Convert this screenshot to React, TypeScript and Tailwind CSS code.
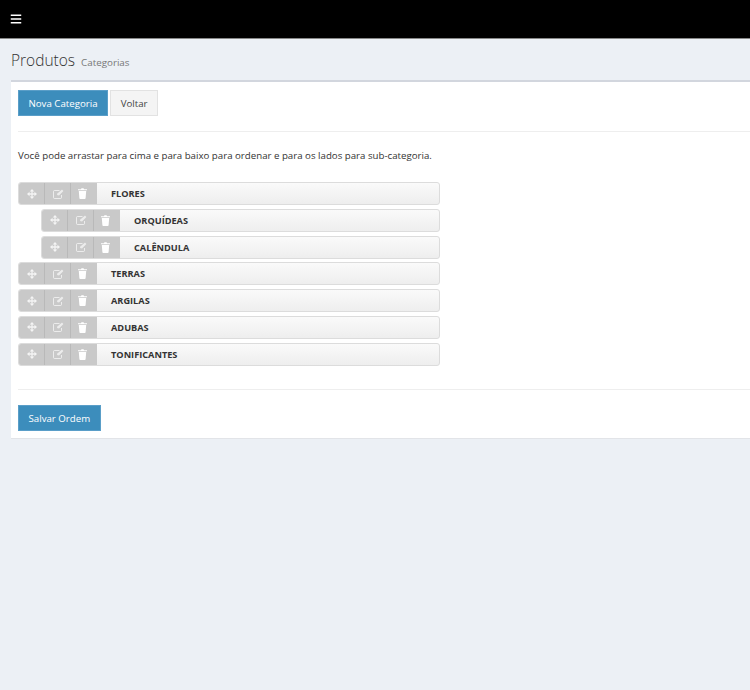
import React from "react";
import { FaBars } from "react-icons/fa";

function MoveIcon() {
  return (
    <svg width="10" height="10" viewBox="0 0 11 11" fill="#fff" fillOpacity="0.8" className="ml-[1px]">
      <path d="M5.5 0 8 2.8H6.2V4.8H8.2V3L11 5.5 8.2 8V6.2H6.2V8.2H8L5.5 11 3 8.2H4.8V6.2H2.8V8L0 5.5 2.8 3V4.8H4.8V2.8H3Z" />
    </svg>
  );
}

function EditIcon() {
  return (
    <svg width="11" height="10" viewBox="0 0 11 10" fill="none" stroke="#fff" strokeOpacity="0.65" className="ml-[1px]">
      <path d="M6.5 1.5H1.5A1 1 0 0 0 .5 2.5V8.5A1 1 0 0 0 1.5 9.5H7.5A1 1 0 0 0 8.5 8.5V6" />
      <path d="M4 6 4.4 4.4 9 .6 10.4 2 6 6.4Z" fill="#fff" fillOpacity="0.65" stroke="none" />
    </svg>
  );
}

function TrashIcon() {
  return (
    <svg width="9" height="11" viewBox="0 0 9 11" fill="#fff" className="mr-[3px]">
      <path d="M0 1.2H3L3.4 .2H5.6L6 1.2H9V2.3H0ZM.8 3H8.2L7.6 10.2A.9.9 0 0 1 6.7 11H2.3A.9.9 0 0 1 1.4 10.2Z" />
    </svg>
  );
}

function Row({ label, child }: { label: string; child?: boolean }) {
  return (
    <li className={child ? "pl-[23px]" : ""}>
      <div className="flex h-[23px] rounded-[3px] border border-[#dcdcdc] bg-gradient-to-b from-[#fafafa] to-[#eeeeee] overflow-hidden">
        <div className="flex shrink-0 bg-[#c9c9c9] h-full">
          <span className="w-[26px] flex items-center justify-center border-r border-[#b9b9b9]"><MoveIcon /></span>
          <span className="w-[26px] flex items-center justify-center border-r border-[#b9b9b9]"><EditIcon /></span>
          <span className="w-[26px] flex items-center justify-center"><TrashIcon /></span>
        </div>
        <span className="pl-[14px] leading-[22px] text-[9.2px] font-bold text-[#333]">{label}</span>
      </div>
    </li>
  );
}

export default function App() {
  return (
    <div className="min-h-[690px] bg-[#ecf0f5] overflow-hidden font-['Open_Sans',sans-serif] text-[#333]">
      <header className="h-[39px] bg-black border-b border-[#888] flex items-center pl-[10px]">
        <FaBars size={12} className="text-white" />
      </header>
      <div className="h-[41px] pl-[11px] flex items-baseline pt-[10px]">
        <h1 className="text-[15.5px] font-light leading-[22px] text-[#333]">Produtos</h1>
        <small className="ml-[6px] text-[9.8px] text-[#777]">Categorias</small>
      </div>
      <section className="ml-[11px] w-[760px] h-[359px] bg-white border-t-[2px] border-[#d2d6de] border-b border-b-[#e2e4e8] px-[7px] pt-[8px]">
        <div className="flex gap-[2px]">
          <button className="h-[26px] px-[9.5px] pt-[2px] text-[9.7px] text-white bg-[#3c8dbc] border border-[#5a9ec8]">Nova Categoria</button>
          <button className="h-[26px] px-[9.5px] pt-[2px] text-[9.7px] text-[#444] bg-[#f4f4f4] border border-[#e2e2e2]">Voltar</button>
        </div>
        <hr className="mt-[15px] border-[#eeeeee]" />
        <p className="mt-[17px] text-[9.7px] leading-[14px] text-[#333]">Você pode arrastar para cima e para baixo para ordenar e para os lados para sub-categoria.</p>
        <ul className="mt-[19px] w-[422px] flex flex-col gap-[3.8px]">
          <Row label="FLORES" />
          <Row label="ORQUÍDEAS" child />
          <Row label="CALÊNDULA" child />
          <Row label="TERRAS" />
          <Row label="ARGILAS" />
          <Row label="ADUBAS" />
          <Row label="TONIFICANTES" />
        </ul>
        <hr className="mt-[23.2px] border-[#eeeeee]" />
        <button className="mt-[15px] h-[26px] px-[9.5px] pt-[2px] text-[9.7px] text-white bg-[#3c8dbc] border border-[#5a9ec8]">Salvar Ordem</button>
      </section>
    </div>
  );
}
